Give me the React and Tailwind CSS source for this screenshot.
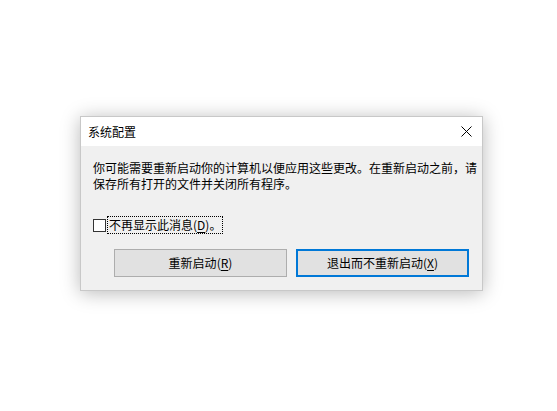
import React from 'react';

const font = { fontFamily: '"Noto Sans CJK SC", "Noto Sans", sans-serif' };

const Mnemonic = ({ label, k }) => (
  <>
    {label}(<span className="underline underline-offset-2">{k}</span>)
  </>
);

export default function App() {
  return (
    <div className="w-[557px] h-[411px] bg-white pt-[116px] pl-[80px]" style={font}>
      <div className="w-[403px] border border-[#c8c8c8] shadow-[0_2px_18px_rgba(0,0,0,0.28)] text-[12px] leading-[16px] text-black">
        {/* 标题栏 */}
        <div className="h-[29px] bg-white flex items-center justify-between pl-[7px] pr-[10px]">
          <span className="text-[12px]">系统配置</span>
          <svg width="11" height="11" viewBox="0 0 11 11">
            <path d="M0.5 0.5 L10.5 10.5 M10.5 0.5 L0.5 10.5" stroke="#000" strokeWidth="1" />
          </svg>
        </div>

        {/* 内容 */}
        <div className="bg-[#f0f0f0] pt-[14px] pb-[13px] pl-[12px] pr-[13px]">
          <p className="whitespace-nowrap">
            你可能需要重新启动你的计算机以便应用这些更改。在重新启动之前，请
            <br />
            保存所有打开的文件并关闭所有程序。
          </p>

          <div className="mt-[24px] flex items-center">
            <span className="w-[13px] h-[13px] border border-[#333] bg-white shrink-0" />
            <span className="ml-[1px] px-[1px] h-[18px] flex items-center border border-dotted border-black">
              不再显示此消息(<span className="underline underline-offset-2">D</span>)。
            </span>
          </div>

          <div className="mt-[15px] flex justify-end gap-[9px]">
            <button className="w-[173px] h-[28px] bg-[#e1e1e1] border border-[#adadad] text-[12px]">
              <Mnemonic label="重新启动" k="R" />
            </button>
            <button className="w-[173px] h-[28px] bg-[#e1e1e1] border-2 border-[#0078d7] text-[12px]">
              <Mnemonic label="退出而不重新启动" k="X" />
            </button>
          </div>
        </div>
      </div>
    </div>
  );
}
